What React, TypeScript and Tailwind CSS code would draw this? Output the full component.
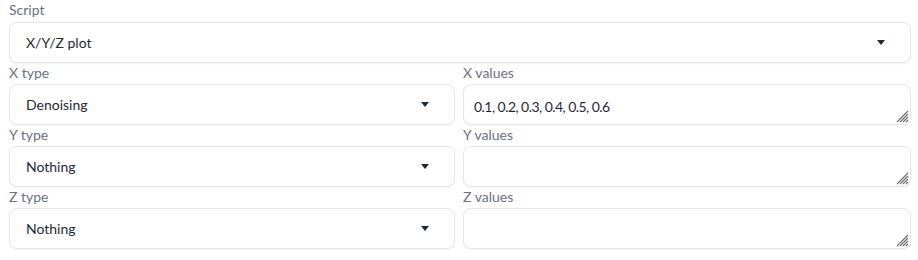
import React from "react";

const font = { fontFamily: "Lato, 'Noto Sans', sans-serif" };

function Arrow() {
  return (
    <svg width="8" height="5" viewBox="0 0 8 5" className="shrink-0">
      <path d="M0 0 H8 L4 5 Z" fill="#1f2937" />
    </svg>
  );
}

function Grip() {
  return (
    <svg width="13" height="13" viewBox="0 0 13 13" className="absolute right-[1px] bottom-[1px]">
      <g stroke="#6b6b6b" strokeWidth="1.1">
        <line x1="12" y1="1" x2="1" y2="12" />
        <line x1="12" y1="4" x2="4" y2="12" />
        <line x1="12" y1="7" x2="7" y2="12" />
        <line x1="12" y1="10" x2="10" y2="12" />
      </g>
    </svg>
  );
}

function Select({ label, value, first }: { label: string; value: string; first?: boolean }) {
  return (
    <div className="flex flex-col">
      <div className={`${first ? "h-[22px]" : "h-[21px]"} text-[14px] leading-[20px] text-[#6b7280]`}>{label}</div>
      <div className="h-[41px] flex items-center justify-between rounded-lg border border-[#e5e7eb] bg-white pl-[16px] pr-[25px] shadow-[0_1px_2px_rgba(0,0,0,0.05)]">
        <span className="text-[14px] text-[#1f2937]">{value}</span>
        <Arrow />
      </div>
    </div>
  );
}

function TextBox({ label, value }: { label: string; value: string }) {
  return (
    <div className="flex flex-col">
      <div className="h-[21px] text-[14px] leading-[20px] text-[#6b7280]">{label}</div>
      <div className="relative h-[41px] rounded-lg border border-[#e5e7eb] bg-white pl-[10px] pt-[9px] shadow-[0_1px_2px_rgba(0,0,0,0.05)]">
        <span className="text-[14px] leading-[20px] tracking-[-0.55px] text-[#1f2937]">{value}</span>
        <Grip />
      </div>
    </div>
  );
}

export default function App() {
  return (
    <div className="w-[918px] h-[260px] bg-white px-[9px]" style={font}>
      <div className="w-[902px]">
        <Select label="Script" value="X/Y/Z plot" first />
        <div className="grid grid-cols-[446px_448px] gap-x-[8px]">
          <Select label="X type" value="Denoising" />
          <TextBox label="X values" value="0.1, 0.2, 0.3, 0.4, 0.5, 0.6" />
          <Select label="Y type" value="Nothing" />
          <TextBox label="Y values" value="" />
          <Select label="Z type" value="Nothing" />
          <TextBox label="Z values" value="" />
        </div>
      </div>
    </div>
  );
}
